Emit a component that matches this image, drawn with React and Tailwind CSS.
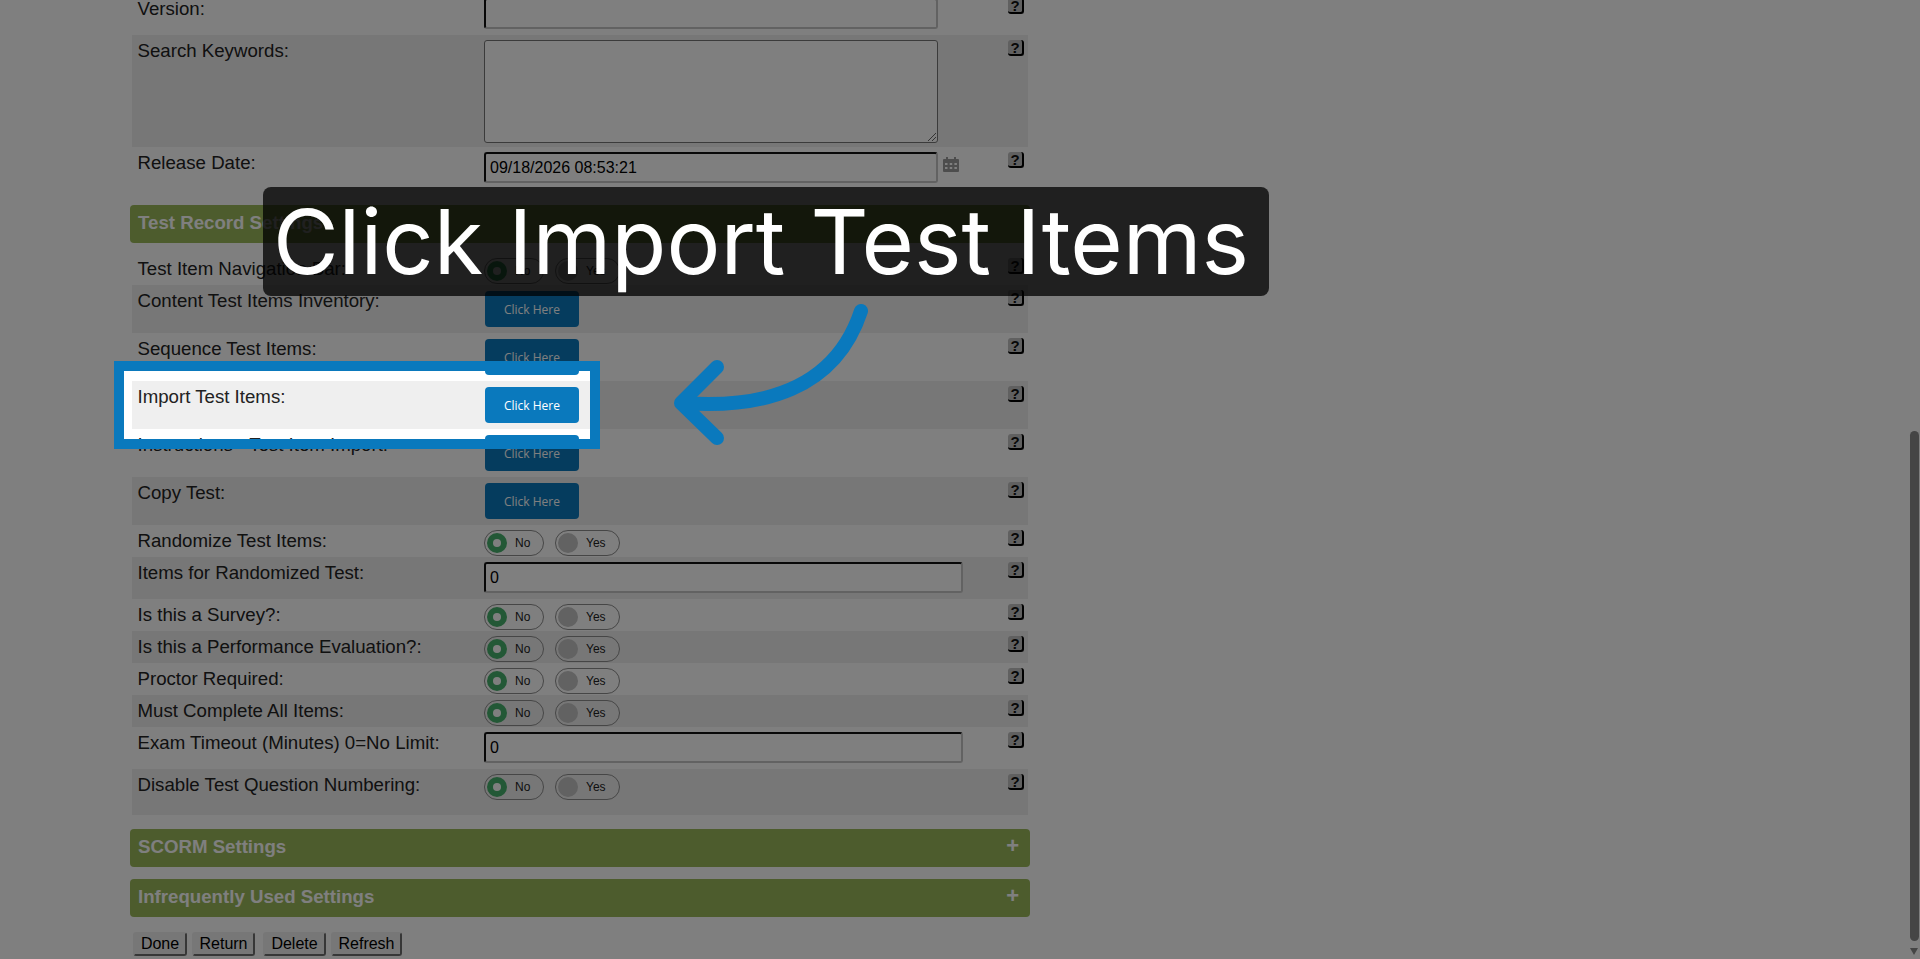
import React from "react";

const labelFont = "[font-family:'Liberation_Sans',Arial,sans-serif]";

const HelpIcon = () => (
  <div className="ml-auto mr-[4px] mt-[5px] flex h-[16px] w-[16px] shrink-0 items-center justify-center rounded-[3px] border-r-2 border-b-2 border-r-black border-b-black bg-[#c0c0c0] text-[15px] leading-none font-bold text-[#111]">
    ?
  </div>
);

const Row = ({ label, height, shaded, children }) => (
  <div
    className={`flex ${height} ${shaded ? "bg-[#efefef]" : ""}`}
  >
    <div className="w-[352px] shrink-0 pt-[5px] pl-[5.5px] text-[18.667px] leading-[21px] text-[#222]">
      {label}
    </div>
    <div className="min-w-0">{children}</div>
    <HelpIcon />
  </div>
);

const TextField = ({ value, width = "w-[454px]" }) => (
  <div
    className={`mt-[5px] box-border flex h-[31px] items-center rounded-[3px] border-2 border-t-[#111] border-r-[#c4c4c4] border-b-[#c4c4c4] border-l-[#111] bg-white pl-[4px] text-[16px] text-black ${width}`}
  >
    {value}
  </div>
);

const ClickHere = () => (
  <button className="mt-[6px] ml-px flex h-[36px] w-[94px] items-center justify-center rounded-[4px] bg-[#0a79bd] pt-[2px] text-[12px] text-white [font-family:'Open_Sans',sans-serif]">
    Click Here
  </button>
);

const Toggle = () => (
  <div className="mt-[5px] flex gap-[11px] text-[12px] text-[#222]">
    <div className="flex h-[26px] w-[60px] items-center rounded-full border border-[#8c8c8c] pl-[2px]">
      <span className="flex h-[20px] w-[20px] items-center justify-center rounded-full bg-[#47b06c]">
        <span className="h-[8px] w-[8px] rounded-full bg-white" />
      </span>
      <span className="ml-[8px]">No</span>
    </div>
    <div className="flex h-[26px] w-[65px] items-center rounded-full border border-[#8c8c8c] pl-[2px]">
      <span className="h-[20px] w-[20px] rounded-full bg-[#c4c4c4]" />
      <span className="ml-[8px]">Yes</span>
    </div>
  </div>
);

const CalendarIcon = () => (
  <svg viewBox="0 0 16 16" className="mt-[9px] ml-[5px] h-[16px] w-[16px] shrink-0" fill="#9a9a9a">
    <path d="M1 3h14a1 1 0 0 1 1 1v11a1 1 0 0 1-1 1H1a1 1 0 0 1-1-1V4a1 1 0 0 1 1-1z" />
    <rect x="3" y="1" width="2" height="3" />
    <rect x="11" y="1" width="2" height="3" />
    <g fill="#fff">
      <rect x="2" y="7" width="2.5" height="2" />
      <rect x="6.7" y="7" width="2.5" height="2" />
      <rect x="11.4" y="7" width="2.5" height="2" />
      <rect x="2" y="11" width="2.5" height="2" />
      <rect x="6.7" y="11" width="2.5" height="2" />
      <rect x="11.4" y="11" width="2.5" height="2" />
    </g>
  </svg>
);

const SectionHeader = ({ title, plus, className = "" }) => (
  <div
    className={`mx-[-2px] flex h-[38px] items-start justify-between rounded-[4px] bg-[#9ab85a] pr-[11px] pl-[8px] text-white ${className}`}
  >
    <span className="pt-[7px] text-[18.667px] leading-[21px] font-bold">{title}</span>
    {plus && <span className="pt-[6px] text-[22px] leading-[22px] font-bold">+</span>}
  </div>
);

const FooterButton = ({ children, className = "" }) => (
  <button
    className={`box-border h-[24px] rounded-[3px] border-2 border-t-[#efefef] border-r-[#6f6f6f] border-b-[#6f6f6f] border-l-[#efefef] bg-[#efefef] text-[16px] leading-none text-black ${className}`}
  >
    {children}
  </button>
);

export default function App() {
  return (
    <div className={`relative flex h-[959px] w-[1920px] overflow-hidden bg-white ${labelFont}`}>
      {/* form */}
      <div className="w-[896px] shrink-0 ml-[132px] mt-[-7px]">
        <Row label="Version:" height="h-[42px]">
          <TextField value="" />
        </Row>
        <Row label="Search Keywords:" height="h-[112px]" shaded>
          <div className="relative mt-[5px] h-[103px] w-[454px] rounded-[3px] border border-[#767676] bg-white">
            <svg viewBox="0 0 8 8" className="absolute right-[1px] bottom-[1px] h-[8px] w-[8px]" stroke="#666" strokeWidth="1">
              <path d="M0 8 8 0M4 8l4-4" />
            </svg>
          </div>
        </Row>
        <Row label="Release Date:" height="h-[42px]">
          <div className="flex">
            <TextField value="09/18/2026 08:53:21" />
            <CalendarIcon />
          </div>
        </Row>

        <SectionHeader title="Test Record Settings" className="mt-[16px] mb-[10px]" />

        <Row label="Test Item Navigation Bar:" height="h-[32px]">
          <Toggle />
        </Row>
        <Row label="Content Test Items Inventory:" height="h-[48px]" shaded>
          <ClickHere />
        </Row>
        <Row label="Sequence Test Items:" height="h-[48px]">
          <ClickHere />
        </Row>
        <Row label="Import Test Items:" height="h-[48px]" shaded>
          <ClickHere />
        </Row>
        <Row label="Instructions - Test Item Import:" height="h-[48px]">
          <ClickHere />
        </Row>
        <Row label="Copy Test:" height="h-[48px]" shaded>
          <ClickHere />
        </Row>
        <Row label="Randomize Test Items:" height="h-[32px]">
          <Toggle />
        </Row>
        <Row label="Items for Randomized Test:" height="h-[42px]" shaded>
          <TextField value="0" width="w-[479px]" />
        </Row>
        <Row label="Is this a Survey?:" height="h-[32px]">
          <Toggle />
        </Row>
        <Row label="Is this a Performance Evaluation?:" height="h-[32px]" shaded>
          <Toggle />
        </Row>
        <Row label="Proctor Required:" height="h-[32px]">
          <Toggle />
        </Row>
        <Row label="Must Complete All Items:" height="h-[32px]" shaded>
          <Toggle />
        </Row>
        <Row label="Exam Timeout (Minutes) 0=No Limit:" height="h-[42px]">
          <TextField value="0" width="w-[479px]" />
        </Row>
        <Row label="Disable Test Question Numbering:" height="h-[46px]" shaded>
          <Toggle />
        </Row>

        <SectionHeader title="SCORM Settings" plus className="mt-[14px]" />
        <SectionHeader title="Infrequently Used Settings" plus className="mt-[12px]" />

        <div className="mt-[15px] ml-px flex">
          <FooterButton className="w-[54px]">Done</FooterButton>
          <FooterButton className="ml-[5px] w-[63px]">Return</FooterButton>
          <FooterButton className="ml-[8px] w-[63px]">Delete</FooterButton>
          <FooterButton className="ml-[5px] w-[71px]">Refresh</FooterButton>
        </div>
      </div>

      {/* scrollbar */}
      <div className="ml-auto flex w-[15px] shrink-0 flex-col items-center pt-[431px]">
        <div className="ml-[3px] h-[510px] w-[9px] rounded-full bg-[#8a8a8a]" />
        <div className="mt-[7px] ml-[3px] h-0 w-0 border-x-[4.5px] border-t-[7px] border-x-transparent border-t-[#8a8a8a]" />
      </div>

      {/* spotlight on the row */}
      <div className="absolute top-[361px] left-[114px] h-[88px] w-[486px] border-[10px] border-[#0a79bd] shadow-[0_0_0_3000px_rgba(0,0,0,0.5)]" />

      {/* tooltip */}
      <div className="absolute top-[187px] left-[263px] flex h-[109px] w-[1006px] items-center justify-center rounded-[8px] bg-[rgba(0,0,0,0.75)] pr-[10px] text-[90px] leading-none whitespace-nowrap text-white [font-family:Inter,sans-serif]">
        Click Import Test Items
      </div>

      {/* arrow */}
      <svg
        className="absolute top-[300px] left-[670px] h-[150px] w-[205px]"
        viewBox="670 300 205 150"
        fill="none"
        stroke="#0a79bd"
        strokeWidth="14"
        strokeLinecap="round"
        strokeLinejoin="round"
      >
        <path d="M861 311C835 390 762 409 682 403" />
        <path d="M717 367 681 403 717 438" />
      </svg>
    </div>
  );
}
